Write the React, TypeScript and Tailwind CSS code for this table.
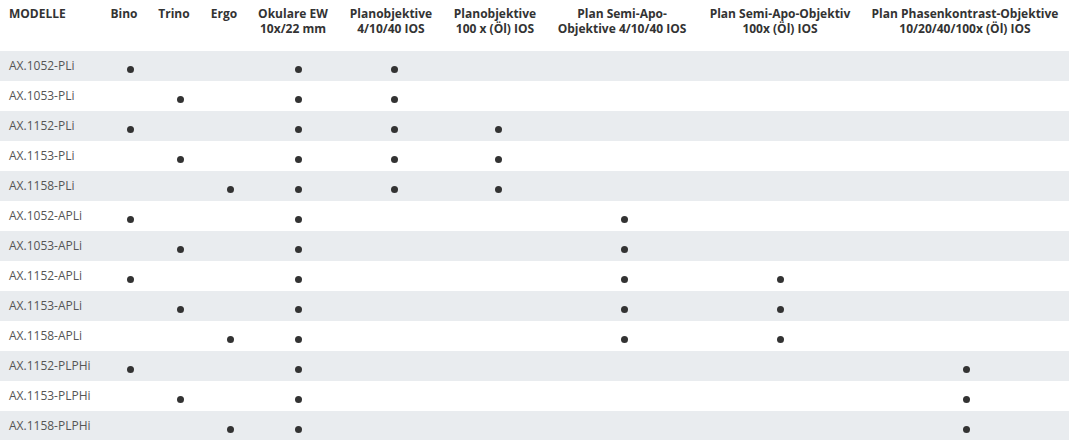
const columns = [
  ["Bino"],
  ["Trino"],
  ["Ergo"],
  ["Okulare EW", "10x/22 mm"],
  ["Planobjektive", "4/10/40 IOS"],
  ["Planobjektive", "100 x (Öl) IOS"],
  ["Plan Semi-Apo-", "Objektive 4/10/40 IOS"],
  ["Plan Semi-Apo-Objektiv", "100x (Öl) IOS"],
  ["Plan Phasenkontrast-Objektive", "10/20/40/100x (Öl) IOS"],
];

// nudge so the dots sit where the original puts them
const dotShift = [
  "ml-3",
  "ml-3",
  "ml-3",
  "ml-[10px]",
  "ml-[6px]",
  "ml-[6px]",
  "ml-1",
  "ml-0",
  "ml-[2px]",
];

const rows: [string, number[]][] = [
  ["AX.1052-PLi", [0, 3, 4]],
  ["AX.1053-PLi", [1, 3, 4]],
  ["AX.1152-PLi", [0, 3, 4, 5]],
  ["AX.1153-PLi", [1, 3, 4, 5]],
  ["AX.1158-PLi", [2, 3, 4, 5]],
  ["AX.1052-APLi", [0, 3, 6]],
  ["AX.1053-APLi", [1, 3, 6]],
  ["AX.1152-APLi", [0, 3, 6, 7]],
  ["AX.1153-APLi", [1, 3, 6, 7]],
  ["AX.1158-APLi", [2, 3, 6, 7]],
  ["AX.1152-PLPHi", [0, 3, 8]],
  ["AX.1153-PLPHi", [1, 3, 8]],
  ["AX.1158-PLPHi", [2, 3, 8]],
];

const grid =
  "grid grid-cols-[99px_50px_50px_50px_88px_108px_100px_154px_162px_208px]";

export default function App() {
  return (
    <div
      className="w-[1069px] h-[440px] bg-white overflow-hidden"
      style={{ fontFamily: '"Open Sans", sans-serif' }}
    >
      <div className={`${grid} h-[51px] pt-[6px] text-[12px] leading-[15px] font-bold text-[#333]`}>
        <div className="pl-[9px]">MODELLE</div>
        {columns.map((lines, i) => (
          <div key={i} className="flex flex-col items-center whitespace-nowrap">
            {lines.map((l) => (
              <span key={l}>{l}</span>
            ))}
          </div>
        ))}
      </div>
      {rows.map(([name, dots], r) => (
        <div
          key={name}
          className={`${grid} h-[30px] items-center text-[12px] text-[#555] ${
            r % 2 === 0 ? "bg-[#e9ecef]" : "bg-white"
          }`}
        >
          <div className="pl-[9px] -mt-[1px]">{name}</div>
          {columns.map((_, c) => (
            <div key={c} className="flex justify-center">
              {dots.includes(c) && (
                <div
                  className={`w-[7px] h-[7px] mt-[6px] rounded-full bg-[#333] ${dotShift[c]}`}
                />
              )}
            </div>
          ))}
        </div>
      ))}
    </div>
  );
}
